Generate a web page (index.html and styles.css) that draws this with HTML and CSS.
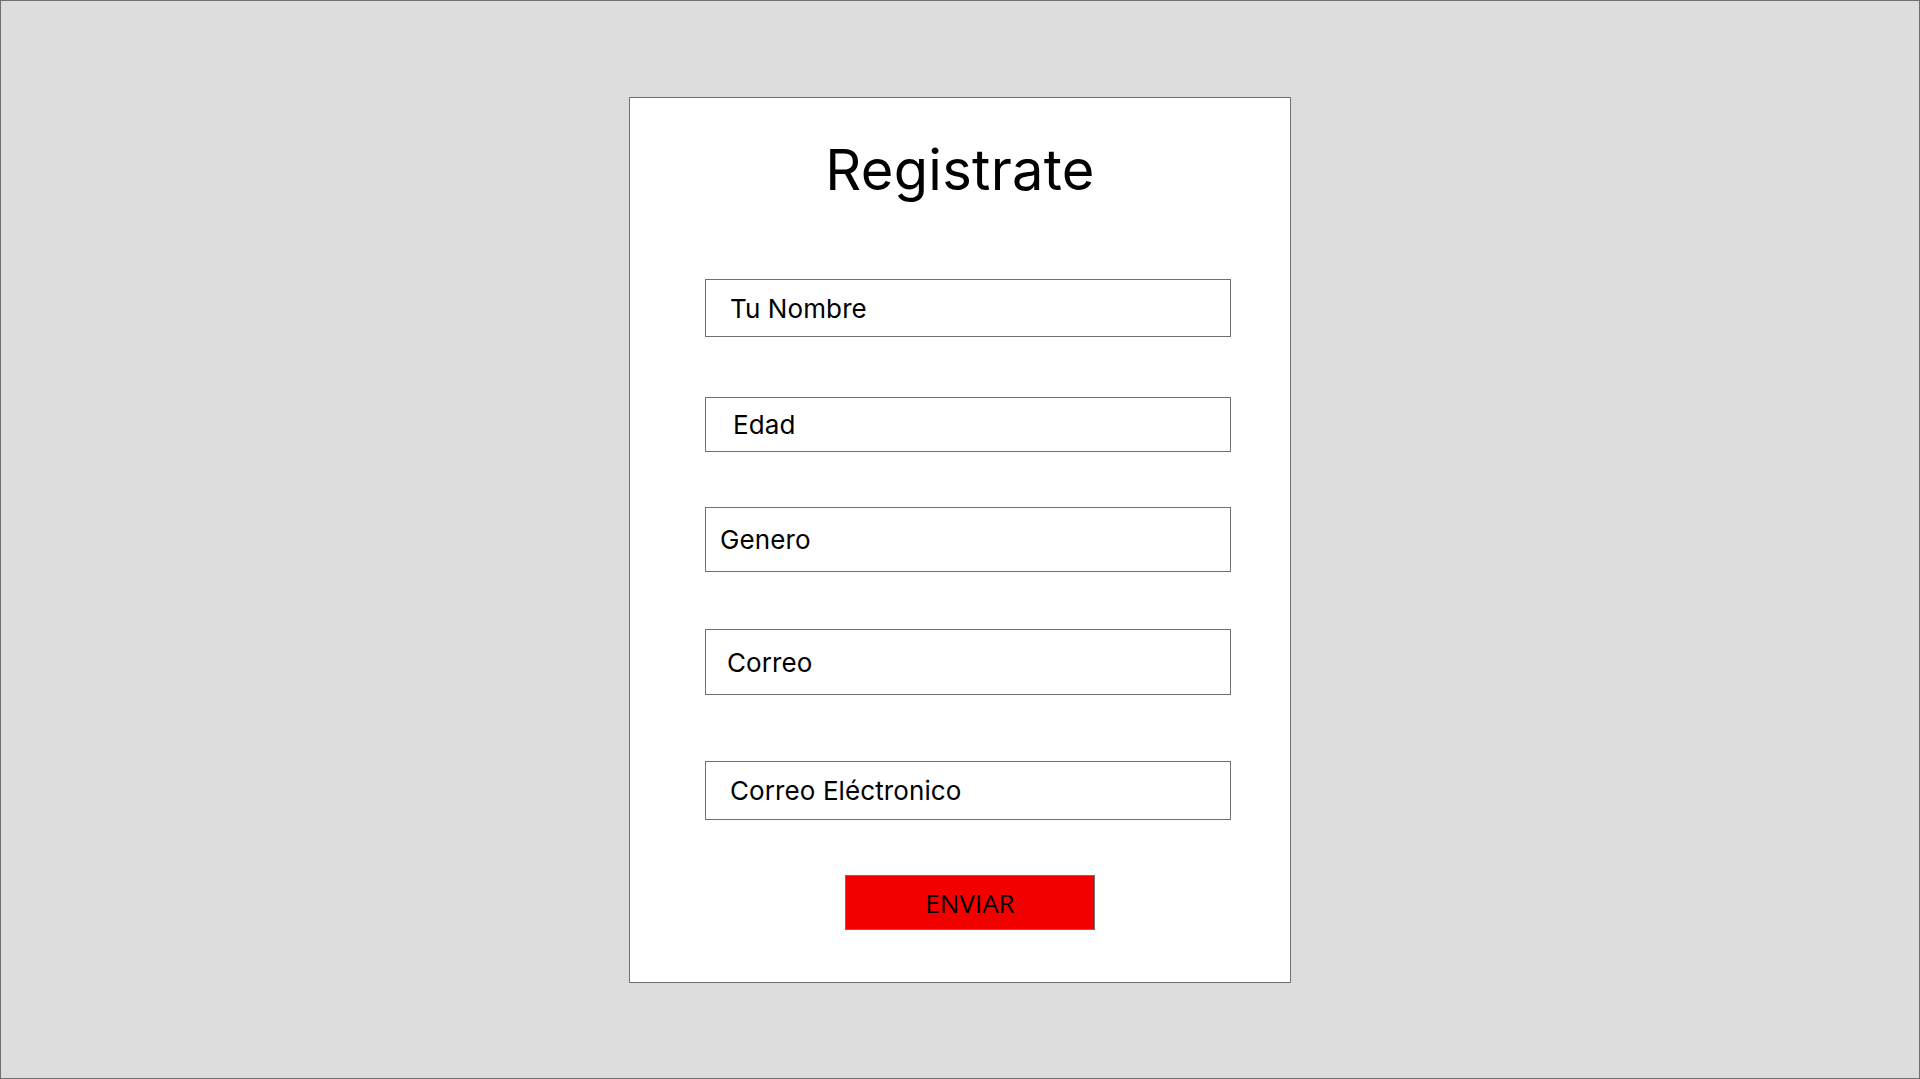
FILE: index.html
```html
<!DOCTYPE html>
<html lang="es">
<head>
<meta charset="utf-8">
<title>Registrate</title>
<link rel="stylesheet" href="styles.css">
</head>
<body>
<div class="page">
  <form class="card">
    <h1 class="title">Registrate</h1>
    <div class="field field-name">Tu Nombre</div>
    <div class="field field-age">Edad</div>
    <div class="field field-gender">Genero</div>
    <div class="field field-mail">Correo</div>
    <div class="field field-email">Correo Eléctronico</div>
    <button type="button" class="submit">ENVIAR</button>
  </form>
</div>
</body>
</html>
```

FILE: styles.css
```css
html, body {
  margin: 0;
  padding: 0;
}

body {
  width: 1920px;
  height: 1079px;
  overflow: hidden;
  font-family: "Inter", "Open Sans", sans-serif;
  color: #000;
}

.page {
  box-sizing: border-box;
  width: 1920px;
  height: 1079px;
  border: 1px solid #707070;
  background: #dddddd;
  display: flex;
  flex-direction: column;
  align-items: center;
  padding-top: 96px;
}

.card {
  box-sizing: border-box;
  width: 662px;
  height: 886px;
  background: #ffffff;
  border: 1px solid #707070;
  display: flex;
  flex-direction: column;
  align-items: flex-start;
  padding: 32px 0 0 75px;
  margin: 0;
}

.title {
  align-self: stretch;
  margin: 0 0 0 -75px;
  height: 78px;
  line-height: 80px;
  font-size: 56px;
  font-weight: 400;
  text-align: center;
  letter-spacing: 0.3px;
}

.field {
  box-sizing: border-box;
  width: 526px;
  border: 1px solid #707070;
  display: flex;
  align-items: center;
  font-size: 26px;
  font-weight: 400;
  letter-spacing: 0.1px;
}

.field-name {
  margin-top: 71px;
  height: 58px;
  padding-left: 24px;
}

.field-age {
  margin-top: 60px;
  height: 55px;
  padding-left: 27px;
}

.field-gender {
  margin-top: 55px;
  height: 65px;
  padding-left: 14px;
}

.field-mail {
  margin-top: 57px;
  height: 66px;
  padding-left: 21px;
}

.field-email {
  margin-top: 66px;
  height: 59px;
  padding-left: 24px;
}

.submit {
  box-sizing: border-box;
  margin: 55px 0 0 140px;
  width: 250px;
  height: 55px;
  background: #f20000;
  border: 1px solid #707070;
  border-radius: 0;
  padding: 0;
  font-family: "Open Sans", sans-serif;
  font-size: 26px;
  font-weight: 400;
  color: #000;
  text-align: center;
}
```
